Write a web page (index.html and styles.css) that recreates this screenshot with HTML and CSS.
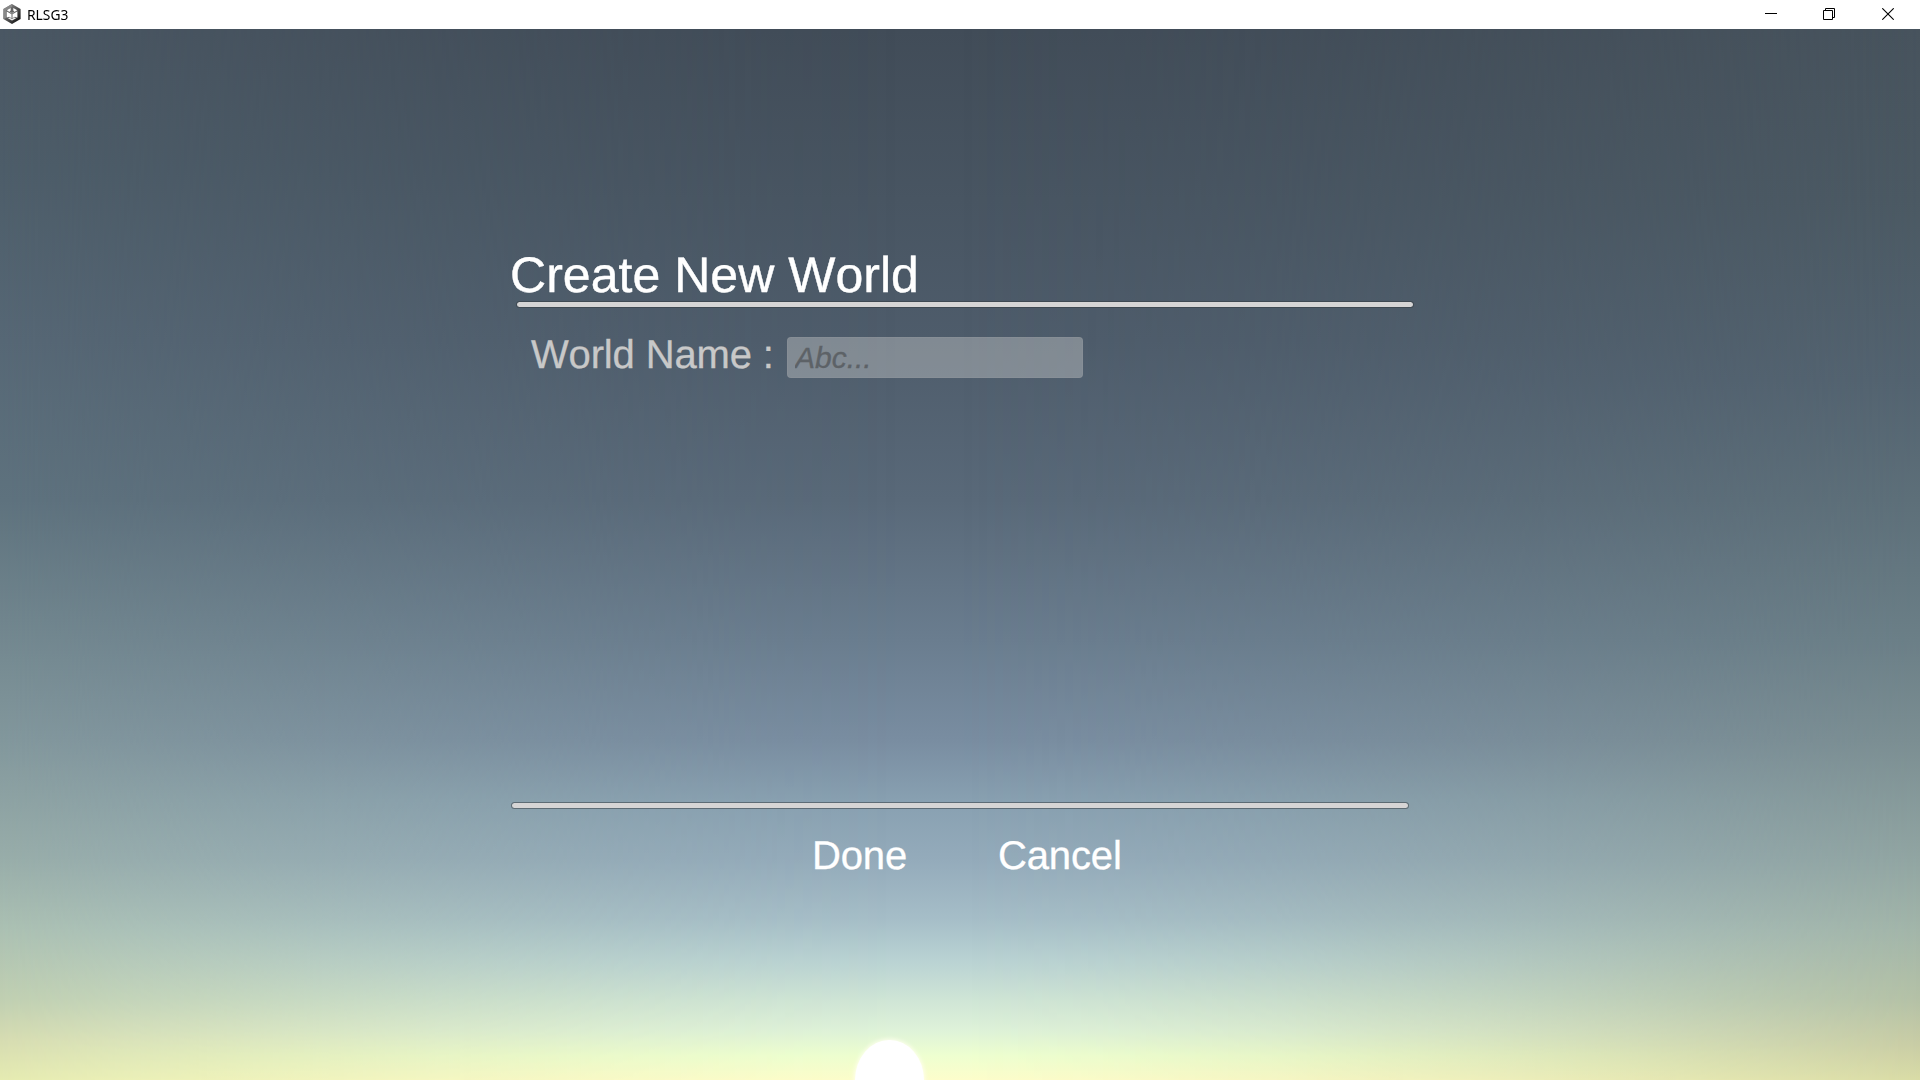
FILE: index.html
```html
<!DOCTYPE html>
<html lang="en">
<head>
<meta charset="utf-8">
<title>RLSG3</title>
<link rel="stylesheet" href="styles.css">
</head>
<body>
<div class="window">
  <header class="titlebar">
    <svg class="app-icon" width="20" height="22" viewBox="0 0 20 22">
      <defs><linearGradient id="hex" x1="0" y1="0" x2="1" y2="1"><stop offset="0" stop-color="#a0a0a0"/><stop offset=".5" stop-color="#555"/><stop offset="1" stop-color="#000"/></linearGradient></defs>
      <path d="M10 1 18.6 6V16L10 21 1.4 16V6Z" fill="url(#hex)"/>
      <path d="M1.4 6 10 1V4L4 7.5V15L1.4 16Z" fill="#888"/>
      <path d="M10 4.3 15.6 7.4V14.4L10 17.6 4.4 14.4V7.4Z" fill="#666"/>
      <path d="M8.700 5V7.500L7.500 8.700 10 10.100 12.500 8.700 11.300 7.500V5L15.200 7.300 10 10.500 4.800 7.300Z" fill="#fff"/>
      <path d="M4.700 8.500 6.500 9.500 9.500 11.300V15.200L7.200 13.700 4.700 14.500ZM15.300 8.500 13.500 9.500 10.500 11.300V15.200L12.800 13.700 15.300 14.500Z" fill="#fff"/>
      <path d="M6 15.200 7.500 14.600 10 16 12.500 14.600 14 15.200 10 17.500Z" fill="#eee"/>
    </svg>
    <span class="app-name">RLSG3</span>
    <div class="controls">
      <svg width="12" height="12" viewBox="0 0 12 12"><path d="M0 5.500H12" stroke="#000"/></svg>
      <svg width="12" height="12" viewBox="0 0 12 12"><path d="M.5 2.500H9.500V11.500H.5ZM2.500 2.500V.5H11.500V9.500H9.500" fill="none" stroke="#000"/></svg>
      <svg width="12" height="12" viewBox="0 0 12 12"><path d="M.3.3 11.700 11.700M11.700.3.3 11.700" stroke="#000" stroke-width="1.100"/></svg>
    </div>
  </header>
  <main class="sky">
    <div class="sun"></div>
    <section class="panel">
      <h1 class="title">Create New World</h1>
      <div class="rule rule-top"></div>
      <div class="field">
        <label class="label" for="world">World Name :</label>
        <input class="input" id="world" type="text" placeholder="Abc...">
      </div>
      <div class="rule rule-bottom"></div>
      <nav class="actions">
        <button class="action" type="button">Done</button>
        <button class="action" type="button">Cancel</button>
      </nav>
    </section>
  </main>
</div>
</body>
</html>
```
FILE: styles.css
```css
* { box-sizing: border-box; }
body { margin: 0; overflow: hidden; font-family: "Liberation Sans", Arial, sans-serif; }
.window { display: flex; flex-direction: column; width: 1920px; height: 1080px; }
.titlebar { display: flex; align-items: center; height: 29px; padding-left: 2px; background: #fff; }
.app-icon { margin-top: -1px; }
.app-name { margin: -2px 0 0 5px; font: 15px/28px "Noto Sans", "Open Sans", sans-serif; color: #000; transform: scaleX(.92); transform-origin: left; }
.controls { display: flex; gap: 47px; margin-left: auto; padding-right: 26px; }
.controls svg { display: block; margin-top: -1px; }
.controls svg:first-child { margin-right: -1px; }

/* Dusk sky: a vertical gradient for the middle, blended into one for each side */
.sky {
  position: relative; flex: 1; overflow: hidden; isolation: isolate;
  background: linear-gradient(#414c58 0, #485562 171px, #4e5c6b 311px, #596979 471px, #6a7d8f 611px, #798da1 711px, #88a0b1 771px, #94abbb 831px, #a6bec8 891px, #b9d2d3 931px, #cfe5d6 971px, #def2d9 1001px, #eeffd0 1027px, #fdfdcb 1051px);
}
.sky::before, .sky::after { content: ""; position: absolute; inset: 0; z-index: -1; }
.sky::before {
  background: linear-gradient(#4a5763 0, #4d5d69 141px, #566775 311px, #5e727e 471px, #70858d 591px, #82979c 711px, #98ada9 831px, #abc0b2 901px, #c0cfb1 971px, #d6dcb1 1011px, #e5ebb1 1051px);
  mask-image: linear-gradient(90deg, #000, rgba(0,0,0,.78) 120px, rgba(0,0,0,.56) 280px, rgba(0,0,0,.36) 440px, rgba(0,0,0,.17) 620px, rgba(0,0,0,.05) 780px, transparent 900px);
}
.sky::after {
  background: linear-gradient(#47535d 0, #4b5963 171px, #536370 351px, #5d6f79 471px, #6b7f87 611px, #7b8e92 711px, #91a5a2 831px, #a2b5a9 901px, #b4c1a6 971px, #c9cda5 1016px, #d9dca6 1051px);
  mask-image: linear-gradient(270deg, #000, rgba(0,0,0,.84) 120px, rgba(0,0,0,.62) 280px, rgba(0,0,0,.42) 440px, rgba(0,0,0,.2) 640px, rgba(0,0,0,.07) 820px, transparent 960px);
}
.sun { position: absolute; left: 855px; top: 1011px; width: 69px; height: 80px; border-radius: 50%; background: #fff; box-shadow: 0 0 4px 1px #fffff0; }

.panel { width: 902px; margin: 217px auto 0 511px; text-rendering: geometricPrecision; }
.title { margin: 0 0 0 -1px; height: 55px; font-size: 50px; line-height: 58px; font-weight: 400; font-kerning: none; color: #fff; white-space: nowrap; -webkit-text-stroke: .4px #fff; letter-spacing: .03px; }
.rule { width: 898px; height: 7px; border: 1px solid rgba(50, 55, 60, .5); border-radius: 4px; background: #d6d5d5; background-clip: padding-box; }
.rule-top { margin-left: 5px; }
.field { display: flex; align-items: flex-start; height: 41px; margin: 29px 0 0 20px; }
.label { width: 256px; font-size: 40px; line-height: 37px; font-kerning: none; letter-spacing: -.15px; color: #c8c8c8; white-space: nowrap; -webkit-text-stroke: .3px #c8c8c8; }
.input { width: 296px; height: 41px; padding: 0 7px; border: 1px solid rgba(150, 155, 158, .25); border-radius: 4px; background: rgba(255, 250, 245, .29); font: italic 30px/39px "Liberation Sans", Arial, sans-serif; color: #323232; outline: 0; }
.input::placeholder { color: #5d6267; opacity: 1; -webkit-text-stroke: .3px #5d6267; }
.rule-bottom { margin-top: 424px; }
.actions { display: flex; gap: 91px; margin: 24px 0 0 301px; }
.action { padding: 0; border: 0; background: none; font: 40px/46px "Liberation Sans", Arial, sans-serif; font-kerning: none; letter-spacing: -.15px; color: #fff; text-rendering: geometricPrecision; -webkit-text-stroke: .3px #fff; }
```
